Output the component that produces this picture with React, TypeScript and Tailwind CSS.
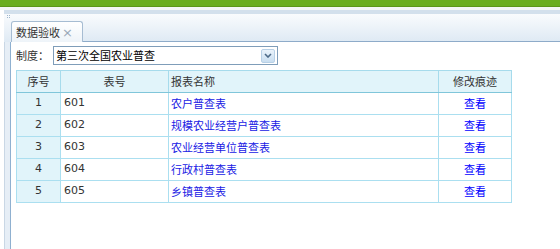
import { FC } from "react";

const rows = [
  { no: 1, code: "601", name: "农户普查表" },
  { no: 2, code: "602", name: "规模农业经营户普查表" },
  { no: 3, code: "603", name: "农业经营单位普查表" },
  { no: 4, code: "604", name: "行政村普查表" },
  { no: 5, code: "605", name: "乡镇普查表" },
];

const cjk = { fontFamily: '"Noto Sans CJK SC", "Noto Sans", sans-serif' };
const latin = { fontFamily: 'Tahoma, "DejaVu Sans", "Noto Sans CJK SC", sans-serif' };

const App: FC = () => {
  return (
    <div className="w-[560px] h-[249px] bg-white overflow-hidden flex flex-col" style={cjk}>
      {/* top green bar */}
      <div className="h-[7px] bg-[#6aad21] border-b border-[#5c961b] shrink-0" />
      <div className="h-[3px] bg-[#f4f6f8] shrink-0" />

      <div className="flex flex-1 pl-[4px]">
        {/* left edge of panel */}
        <div className="w-[7px] flex flex-col">
          <div className="h-[4px] bg-[#d3e0ec]" />
          <div className="h-[28px] bg-gradient-to-b from-[#f9fbfd] to-[#dfeaf4] relative">
            <div className="absolute left-[3px] top-[1px] w-[1px] h-[1px] bg-[#9fb6cc]" />
            <div className="absolute left-[5px] top-[1px] w-[1px] h-[1px] bg-[#9fb6cc]" />
            <div className="absolute left-[3px] top-[3px] w-[1px] h-[1px] bg-[#9fb6cc]" />
            <div className="absolute left-[5px] top-[3px] w-[1px] h-[1px] bg-[#9fb6cc]" />
          </div>
          <div className="flex-1 bg-[#e6eef6] border-l border-[#c9d7e5] border-r border-r-[#8fb0d0]" />
        </div>

        <div className="flex-1 flex flex-col">
          {/* panel header with tab */}
          <div className="h-[4px] bg-[#d3e0ec]" />
          <div className="h-[28px] bg-gradient-to-b from-[#f9fbfd] to-[#dfeaf4] border-b border-[#8eabc9] flex items-end">
            <div className="h-[21px] w-[72px] -mb-px border border-[#a6bcd2] border-b-0 rounded-t-[3px] bg-gradient-to-b from-[#ffffff] to-[#eef4f9] flex items-center pl-[4px] text-[11px] text-[#333] leading-none">
              <span>数据验收</span>
              <span className="text-[#9aa9b8] text-[13px] ml-[2px]" style={latin}>×</span>
            </div>
          </div>

          {/* content */}
          <div className="flex-1 bg-white pl-[5px] pt-[4px]">
            <div className="flex items-center h-[19px] text-[11px] text-[#333]">
              <span className="w-[37px]">制度：</span>
              <div className="w-[225px] h-[19px] border border-[#7f9db9] flex items-center justify-between pl-[2px] pr-[2px] text-[#000]">
                <span>第三次全国农业普查</span>
                <div className="w-[14px] h-[14px] rounded-[2px] bg-gradient-to-b from-[#eaf3fb] to-[#c9def0] border border-[#b8d0e6] flex items-center justify-center">
                  <svg width="8" height="5" viewBox="0 0 8 5">
                    <path d="M1 1 L4 4 L7 1" stroke="#4d6a88" strokeWidth="1.6" fill="none" />
                  </svg>
                </div>
              </div>
            </div>

            <table className="mt-[5px] border-collapse table-fixed w-[495px] text-[11px]">
              <colgroup>
                <col className="w-[44px]" />
                <col className="w-[108px]" />
                <col className="w-[270px]" />
                <col className="w-[73px]" />
              </colgroup>
              <thead>
                <tr className="h-[22px] bg-[#e1f4fa] text-[#333]">
                  <th className="font-normal border border-[#a6dbec] border-b-[#80c6da] text-center">序号</th>
                  <th className="font-normal border border-[#a6dbec] border-b-[#80c6da] text-center">表号</th>
                  <th className="font-normal border border-[#a6dbec] border-b-[#80c6da] text-left pl-[2px]">报表名称</th>
                  <th className="font-normal border border-[#a6dbec] border-b-[#80c6da] text-center">修改痕迹</th>
                </tr>
              </thead>
              <tbody>
                {rows.map((r) => (
                  <tr key={r.no} className="h-[22px]">
                    <td className="bg-[#e1f4fa] border border-[#abdff0] text-center text-[11px] text-[#333]" style={latin}>
                      {r.no}
                    </td>
                    <td className="border border-[#abdff0] pl-[3px] text-[11px] text-[#333]" style={latin}>
                      {r.code}
                    </td>
                    <td className="border border-[#abdff0] pl-[2px] text-[#2020e4]">{r.name}</td>
                    <td className="border border-[#abdff0] text-center text-[#0000ff]">查看</td>
                  </tr>
                ))}
              </tbody>
            </table>
          </div>
        </div>
      </div>
    </div>
  );
};

export default App;
